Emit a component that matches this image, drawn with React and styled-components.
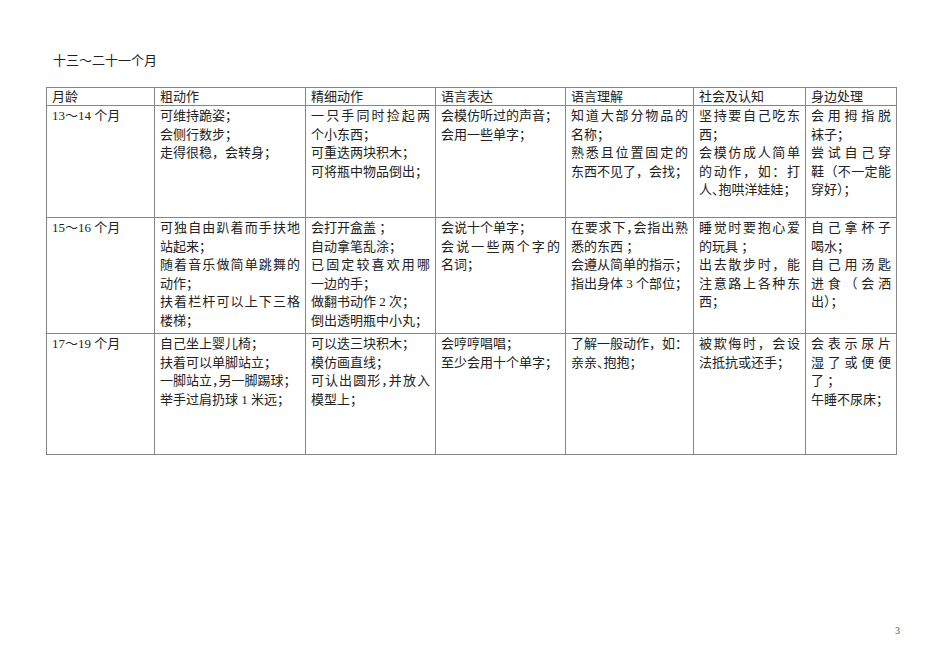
import React from 'react';
import styled, { createGlobalStyle } from 'styled-components';

const GlobalStyle = createGlobalStyle`
  html, body {
    margin: 0;
    padding: 0;
    background: #ffffff;
  }
  body {
    font-family: "Liberation Serif", "Noto Sans CJK SC", serif;
    color: #222222;
  }
`;

const Page = styled.main`
  box-sizing: border-box;
  display: flex;
  flex-direction: column;
  height: 672px;
  padding: 52px 0 0 46px;
  font-size: 13px;
`;

const Title = styled.h1`
  margin: 0 0 17px 7px;
  font-size: 13px;
  font-weight: 400;
  line-height: 18px;
`;

const Grid = styled.section`
  display: grid;
  grid-template-columns: 108px 151px 130px 130px 128px 112px 91px;
  width: max-content;
  border-left: 1px solid #858585;
  border-top: 1px solid #858585;
`;

const Cell = styled.div`
  box-sizing: border-box;
  height: ${(p) => p.$height}px;
  border-right: 1px solid #858585;
  border-bottom: 1px solid #858585;
  padding: ${(p) => (p.$head ? '0 5px' : '1px 5px 0 5px')};
  line-height: ${(p) => (p.$head ? '17px' : '18.5px')};
  overflow: visible;
`;

const Line = styled.div`
  text-align: ${(p) => (p.$justify ? 'justify' : 'left')};
  text-align-last: ${(p) => (p.$justify ? 'justify' : 'auto')};
  white-space: ${(p) => (p.$justify ? 'normal' : 'nowrap')};
`;

const Half = styled.span`
  font-feature-settings: "halt";
`;

const Footer = styled.footer`
  margin-top: auto;
  padding: 0 50px 35px 0;
  text-align: right;
  font-size: 10px;
  line-height: 12px;
  color: #555555;
`;

const headers = ['月龄', '粗动作', '精细动作', '语言表达', '语言理解', '社会及认知', '身边处理'];

// each cell: list of paragraphs, each paragraph: list of lines
// "^" marks a half-width punctuation mark
const rows = [
  {
    height: 112,
    cells: [
      [['13～14 个月']],
      [['可维持跪姿；'], ['会侧行数步；'], ['走得很稳，会转身；']],
      [['一只手同时捡起两', '个小东西；'], ['可重迭两块积木；'], ['可将瓶中物品倒出；']],
      [['会模仿听过的声音；'], ['会用一些单字；']],
      [['知道大部分物品的', '名称；'], ['熟悉且位置固定的', '东西不见了，会找；']],
      [['坚持要自己吃东', '西；'], ['会模仿成人简单', '的动作，如：打', '人^、抱哄洋娃娃；']],
      [['会用拇指脱', '袜子；'], ['尝试自己穿', '鞋（不一定能', '穿好）；']],
    ],
  },
  {
    height: 116,
    cells: [
      [['15～16 个月']],
      [['可独自由趴着而手扶地', '站起来；'], ['随着音乐做简单跳舞的', '动作；'], ['扶着栏杆可以上下三格', '楼梯；']],
      [['会打开盒盖 ；'], ['自动拿笔乱涂；'], ['已固定较喜欢用哪', '一边的手；'], ['做翻书动作 2 次；'], ['倒出透明瓶中小丸；']],
      [['会说十个单字；'], ['会说一些两个字的', '名词；']],
      [['在要求下^，会指出熟', '悉的东西 ；'], ['会遵从简单的指示；'], ['指出身体 3 个部位；']],
      [['睡觉时要抱心爱', '的玩具 ；'], ['出去散步时，能', '注意路上各种东', '西；']],
      [['自己拿杯子', '喝水；'], ['自己用汤匙', '进食（会洒', '出）；']],
    ],
  },
  {
    height: 121,
    cells: [
      [['17～19 个月']],
      [['自己坐上婴儿椅；'], ['扶着可以单脚站立；'], ['一脚站立^，另一脚踢球；'], ['举手过肩扔球 1 米远；']],
      [['可以迭三块积木；'], ['模仿画直线；'], ['可认出圆形^，并放入', '模型上；']],
      [['会哼哼唱唱；'], ['至少会用十个单字；']],
      [['了解一般动作，如：'], ['亲亲^、抱抱；']],
      [['被欺侮时，会设', '法抵抗或还手；']],
      [['会表示尿片', '湿了或便便', '了 ；'], ['午睡不尿床；']],
    ],
  },
];

function renderText(text) {
  const parts = text.split('^');
  return parts.map((part, i) =>
    i === 0 ? (
      <React.Fragment key={i}>{part}</React.Fragment>
    ) : (
      <React.Fragment key={i}>
        <Half>{part[0]}</Half>
        {part.slice(1)}
      </React.Fragment>
    )
  );
}

const CellText = ({ paragraphs }) =>
  paragraphs.map((lines, p) =>
    lines.map((line, l) => (
      <Line key={`${p}-${l}`} $justify={l < lines.length - 1}>
        {renderText(line)}
      </Line>
    ))
  );

export default function App() {
  return (
    <>
      <GlobalStyle />
      <Page>
        <Title>十三～二十一个月</Title>
        <Grid>
          {headers.map((h) => (
            <Cell key={h} $head $height={18}>
              {h}
            </Cell>
          ))}
          {rows.map((row, r) =>
            row.cells.map((paragraphs, c) => (
              <Cell key={`${r}-${c}`} $height={row.height}>
                <CellText paragraphs={paragraphs} />
              </Cell>
            ))
          )}
        </Grid>
        <Footer>3</Footer>
      </Page>
    </>
  );
}
